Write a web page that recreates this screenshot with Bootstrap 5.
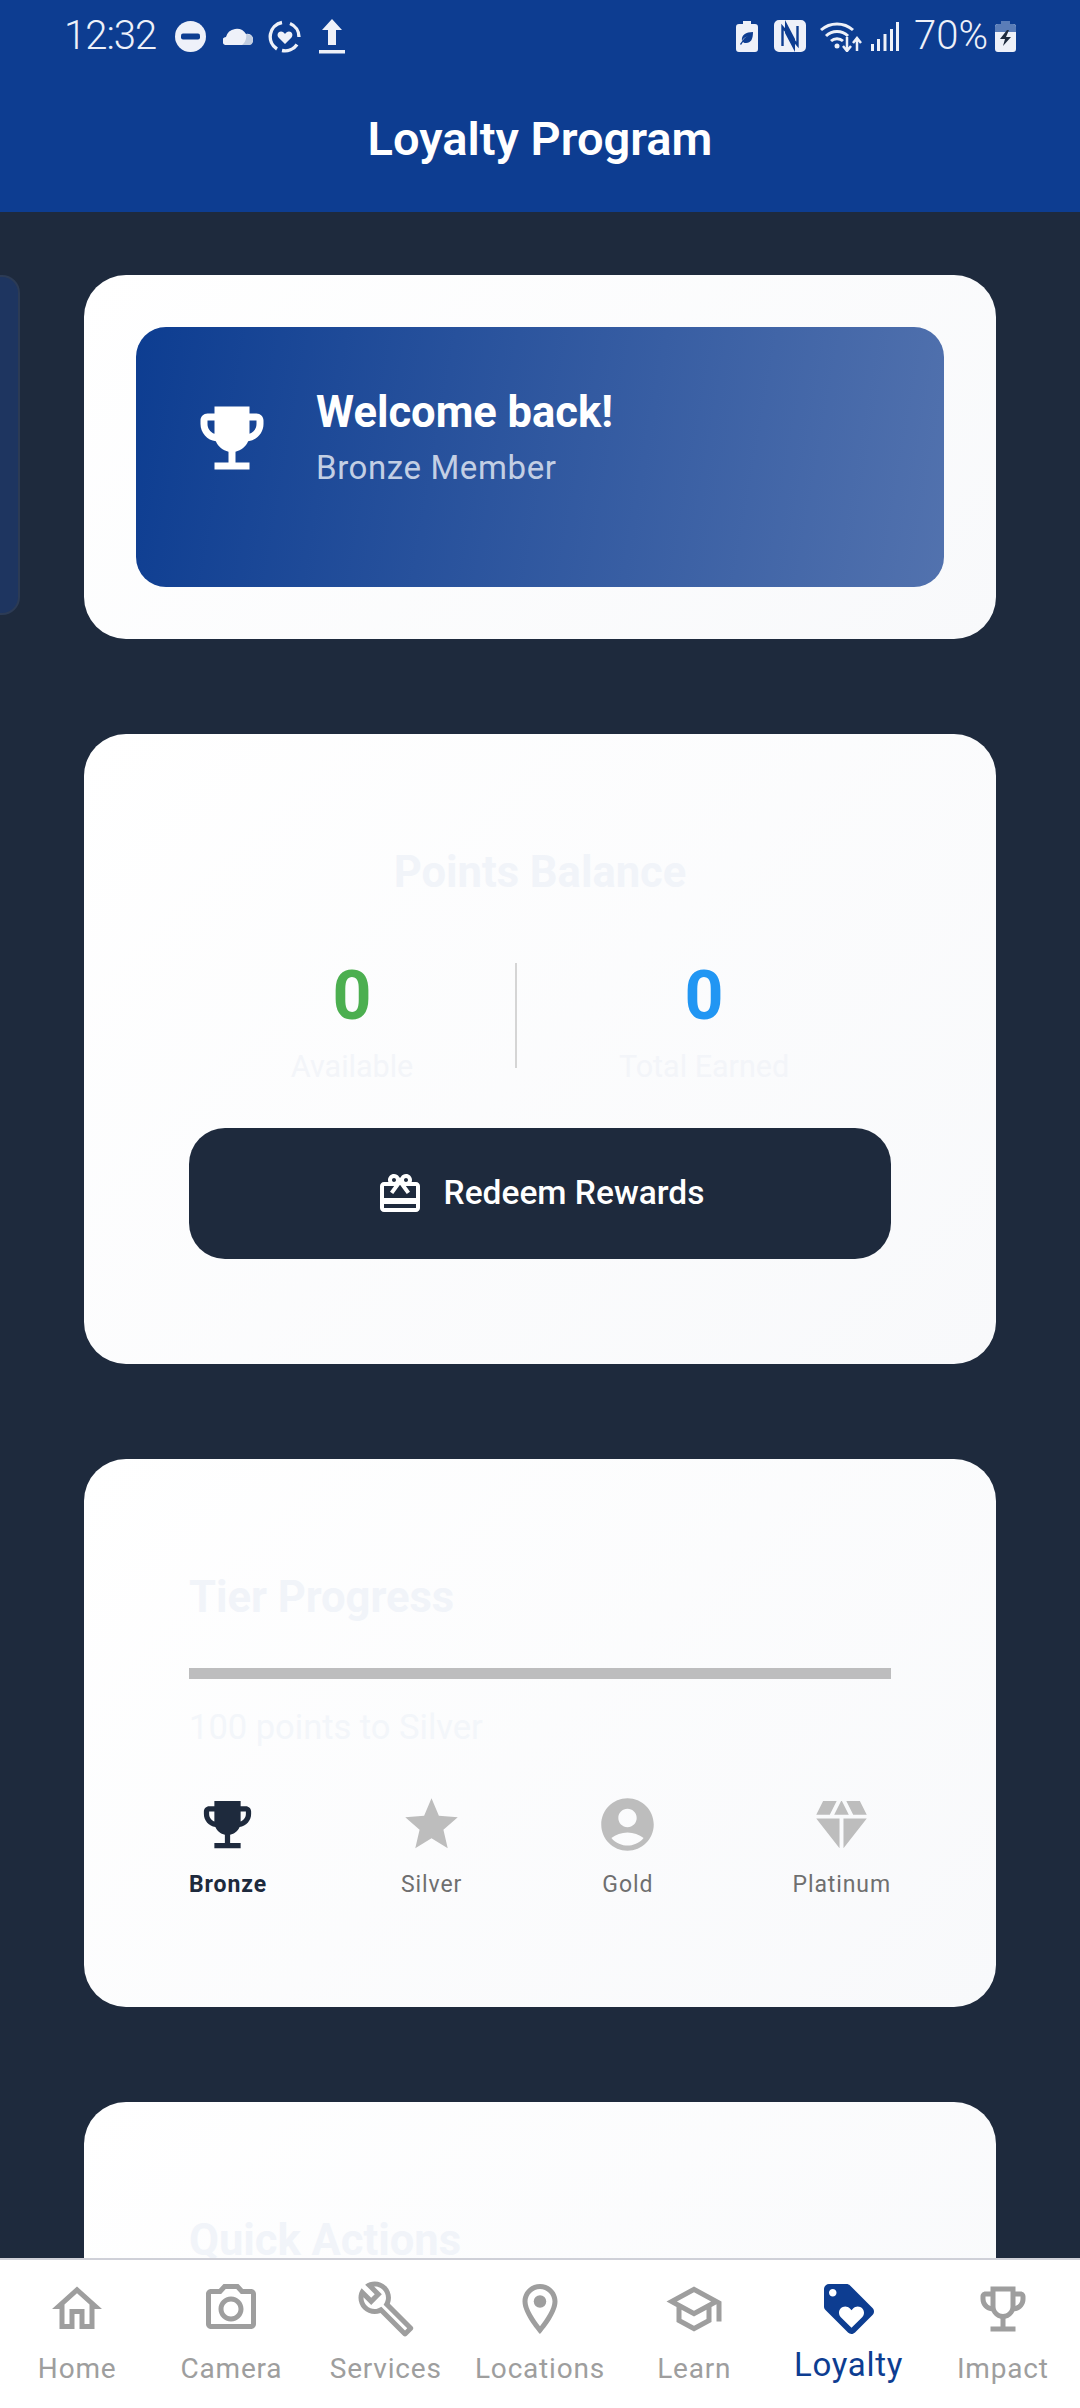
<!DOCTYPE html>
<html lang="en">
<head>
<meta charset="utf-8">
<title>Loyalty Program</title>
<link href="https://cdn.jsdelivr.net/npm/bootstrap@5.3.0/dist/css/bootstrap.min.css" rel="stylesheet">
<style>
html,body{height:100%;margin:0;}
body{font-family:Roboto,"Liberation Sans",sans-serif;background:#1e2a3d;overflow:hidden;}
.app-shell{height:2408px;width:1080px;}
.top-bar{height:212px;background:#0d3d91;color:#fff;flex:none;}
.status-row{height:72px;padding:19px 64px 0 64px;color:#eef1f9;}
.status-time{font-size:40px;font-weight:300;line-height:34px;letter-spacing:-1px;}
.status-pct{font-size:40px;font-weight:300;line-height:34px;margin-left:15px;}
.sti{display:block;flex:none;}
.sti-dnd{margin-left:19px;margin-top:2px;}
.sti-cloud{margin-left:17px;margin-top:7px;}
.sti-ring{margin-left:15px;margin-top:1px;}
.sti-up{margin-left:17px;}
.sti-eco{margin-top:2px;}
.sti-nfc{margin-left:16px;margin-top:1px;}
.sti-wifi{margin-left:14px;margin-top:2px;}
.sti-sig{margin-left:9px;margin-top:3px;}
.sti-bat{margin-left:7px;margin-top:2px;}
.page-title{font-size:47px;font-weight:600;line-height:54px;margin:0;padding-top:40px;color:#fff;}
.scroller{flex:1 1 auto;min-height:0;overflow:hidden;padding:63px 84px 0 84px;}
.side-peek{position:absolute;left:-40px;top:275px;width:60px;height:340px;background:#1e3560;border:2px solid #2c3b55;border-radius:18px;}
.panel{background:linear-gradient(135deg,#fff 0%,#f8f9fb 100%);border-radius:42px;margin-bottom:95px;flex:none;}
.panel-a{height:364px;padding:52px;}
.panel-b{height:630px;padding:114px 105px 0;}
.panel-c{height:548px;padding:114px 105px 0;}
.panel-d{height:400px;padding:114px 105px 0;}
.hero{height:260px;border-radius:30px;background:linear-gradient(100deg,#0d3d91 0%,#5272ae 100%);padding:0 54px 39px;color:#fff;gap:42px;}
.hero-title{font-size:43.5px;font-weight:700;line-height:50px;margin:0;}
.hero-sub{font-size:33px;line-height:38px;color:#c3cfe4;letter-spacing:.6px;margin-top:11px;}
.ghost-title{font-size:43.5px;font-weight:700;line-height:50px;color:#f1f4f9;margin:0;}
.stat-num{font-size:68px;font-weight:700;line-height:80px;}
.stat-label{font-size:30.5px;line-height:34px;color:#f3f5f9;margin-top:14px;}
.tone-green{color:#4caf50;}
.tone-blue{color:#2196f3;}
.stat-rule{width:2px;height:105px;background:#d5d5d5;flex:none;margin-top:7px;}
.stat-row{margin-top:58px;}
.redeem-btn{height:131px;width:702px;border-radius:36px;background:#1e2a3d;color:#fff;font-size:33.5px;font-weight:500;margin-top:44px;gap:20px;border:0;}
.redeem-btn:hover{background:#1e2a3d;color:#fff;}
.tier-track{height:11px;background:#bdbdbe;margin-top:45px;}
.tier-note{font-size:34.5px;line-height:38px;color:#f3f6fa;margin-top:29px;}
.tier-row{margin-top:47px;}
.tier-item{color:#6f6f6f;font-size:23px;line-height:26px;letter-spacing:.9px;}
.tier-item svg{fill:#bdbdbd;}
.tier-on{color:#1e2a3d;font-weight:700;}
.tier-on svg{fill:#1e2a3d;}
.tier-gap{height:16px;}
.tab-bar{height:150px;flex:none;background:#fff;border-top:2px solid #cfd0d8;}
.tab-item{width:calc(100% / 7);color:#9e9e9e;font-size:28px;line-height:34px;letter-spacing:.8px;padding-top:19px;}
.tab-item svg{fill:#9e9e9e;display:block;}
.tab-text{margin-top:13px;}
.tab-on{color:#0d3d91;font-size:33px;letter-spacing:.7px;}
.tab-on svg{fill:#0d3d91;}
.tab-on .tab-text{margin-top:9px;}
</style>
</head>
<body>
<div class="app-shell d-flex flex-column position-relative overflow-hidden">
  <header class="top-bar">
    <div class="status-row d-flex align-items-start justify-content-between">
      <div class="d-flex align-items-start">
        <span class="status-time">12:32</span>
        <svg class="sti sti-dnd" width="31" height="31" viewBox="0 0 31 31"><circle cx="15.5" cy="15.5" r="15.5" fill="#eef1f9"/><rect x="6" y="12.5" width="19" height="6" rx="2" fill="#0d3d91"/></svg>
        <svg class="sti sti-cloud" width="30" height="19" viewBox="0 0 30 19"><path d="M4 19a4 4 0 0 1-1-8 11 11 0 0 1 20-3 5 5 0 0 1 3 11z" fill="#eef1f9"/><path d="M23 8c4 0 7 2 7 6s-2 5-4 5h-7c3-2 5-7 4-11z" fill="#c1cde0"/></svg>
        <svg class="sti sti-ring" width="34" height="33" viewBox="0 0 34 33"><path d="M14 2.500A14.500 14.500 0 0 0 9 29M14 30.500a14.500 14.500 0 0 0 15-6M31 17a14.500 14.500 0 0 0-9-13.500" fill="none" stroke="#eef1f9" stroke-width="3.400"/><path d="M17 24l-6.500-6.500c-2-2.500-.5-6 2.500-6 1.800 0 3 1 4 2.500 1-1.500 2.200-2.500 4-2.500 3 0 4.500 3.500 2.500 6z" fill="#eef1f9"/></svg>
        <svg class="sti sti-up" width="26" height="35" viewBox="0 0 26 35"><path d="M13 0l10 11h-6v15H9V11H3z" fill="#eef1f9"/><rect y="31" width="26" height="3.500" fill="#eef1f9"/></svg>
      </div>
      <div class="d-flex align-items-start">
        <svg class="sti sti-eco" width="22" height="31" viewBox="0 0 22 31"><path d="M7 0h8v3h4a3 3 0 0 1 3 3v22a3 3 0 0 1-3 3H3a3 3 0 0 1-3-3V6a3 3 0 0 1 3-3h4z" fill="#eef1f9"/><path d="M6 20c-1-6 4-9 11-9 0 7-2 11-7 11-1 0-2 0-3-1l-2 3-1-1 3-4c1-2 3-3 5-4-2 1-5 2-6 5z" fill="#0d3d91"/></svg>
        <svg class="sti sti-nfc" width="32" height="32" viewBox="0 0 32 32"><path d="M5 0h6v32H5a5 5 0 0 1-5-5V5a5 5 0 0 1 5-5zM21 0h6a5 5 0 0 1 5 5v22a5 5 0 0 1-5 5h-6z" fill="#eef1f9"/><path d="M11 0l10 19V0zM21 32L11 13v19z" fill="#eef1f9"/><path d="M8.500 26V7l15 18V6" fill="none" stroke="#0d3d91" stroke-width="2.400"/></svg>
        <svg class="sti sti-wifi" width="42" height="31" viewBox="0 0 42 31"><path d="M1 9a24 24 0 0 1 32 0M6 15a16 16 0 0 1 22 0M11 20a9 9 0 0 1 12 0" fill="none" stroke="#eef1f9" stroke-width="3"/><circle cx="17" cy="25" r="2.500" fill="#eef1f9"/><path d="M27 16v13m-4-4l4 5 4-5M37 30V18m-4 4l4-5 4 5" fill="none" stroke="#eef1f9" stroke-width="2.500"/></svg>
        <svg class="sti sti-sig" width="28" height="29" viewBox="0 0 28 29"><g fill="#eef1f9"><rect y="22" width="3" height="7"/><rect x="6" y="17" width="3" height="12"/><rect x="12.500" y="12" width="3" height="17"/><rect x="19" y="7" width="3" height="22"/><rect x="25" y="0" width="3" height="29"/></g></svg>
        <span class="status-pct">70%</span>
        <svg class="sti sti-bat" width="21" height="31" viewBox="0 0 21 31"><path d="M6 0h9v3h3a3 3 0 0 1 3 3v22a3 3 0 0 1-3 3H3a3 3 0 0 1-3-3V6a3 3 0 0 1 3-3h3z" fill="#eef1f9"/><path d="M6 0h9v3h3a3 3 0 0 1 3 3v5H0V6a3 3 0 0 1 3-3h3z" fill="#5a7db8"/><path d="M12 9l-7 9h5l-2 7 8-9h-5l3-7z" fill="#1e2a3d"/></svg>
      </div>
    </div>
    <h1 class="page-title text-center">Loyalty Program</h1>
  </header>

  <div class="side-peek"></div>

  <main class="scroller d-flex flex-column">
    <section class="panel panel-a">
      <div class="hero d-flex align-items-center">
        <svg width="84" height="84" viewBox="0 0 24 24" fill="#fff"><path d="M19 5h-2V3H7v2H5c-1.100 0-2 .9-2 2v1c0 2.550 1.920 4.630 4.390 4.940.63 1.500 1.980 2.630 3.610 2.960V19H7v2h10v-2h-4v-3.100c1.630-.33 2.980-1.460 3.610-2.960C19.080 12.630 21 10.550 21 8V7c0-1.100-.9-2-2-2zM5 8V7h2v3.820C5.840 10.400 5 9.300 5 8zm14 0c0 1.300-.84 2.400-2 2.820V7h2v1z"/></svg>
        <div>
          <h2 class="hero-title">Welcome back!</h2>
          <div class="hero-sub">Bronze Member</div>
        </div>
      </div>
    </section>

    <section class="panel panel-b">
      <h2 class="ghost-title text-center">Points Balance</h2>
      <div class="stat-row d-flex align-items-start">
        <div class="flex-grow-1 text-center"><div class="stat-num tone-green">0</div><div class="stat-label">Available</div></div>
        <div class="stat-rule"></div>
        <div class="flex-grow-1 text-center"><div class="stat-num tone-blue">0</div><div class="stat-label">Total Earned</div></div>
      </div>
      <button type="button" class="btn redeem-btn d-flex align-items-center justify-content-center">
        <svg width="48" height="48" viewBox="0 0 24 24" fill="#fff"><path d="M20 6h-2.180c.11-.31.18-.65.18-1 0-1.660-1.340-3-3-3-1.050 0-1.960.54-2.500 1.350l-.5.67-.5-.68C10.960 2.540 10.050 2 9 2 7.340 2 6 3.340 6 5c0 .35.07.69.18 1H4c-1.110 0-1.990.89-1.990 2L2 19c0 1.110.89 2 2 2h16c1.110 0 2-.89 2-2V8c0-1.110-.89-2-2-2zm-5-2c.55 0 1 .45 1 1s-.45 1-1 1-1-.45-1-1 .45-1 1-1zM9 4c.55 0 1 .45 1 1s-.45 1-1 1-1-.45-1-1 .45-1 1-1zm11 15H4v-2h16v2zm0-5H4V8h5.080L7 10.830 8.620 12 12 7.400l3.380 4.600L17 10.830 14.920 8H20v6z"/></svg>
        <span>Redeem Rewards</span>
      </button>
    </section>

    <section class="panel panel-c">
      <h2 class="ghost-title">Tier Progress</h2>
      <div class="tier-track"></div>
      <div class="tier-note">100 points to Silver</div>
      <div class="tier-row d-flex justify-content-between">
        <div class="tier-item tier-on d-flex flex-column align-items-center">
          <svg width="63" height="63" viewBox="0 0 24 24"><path d="M19 5h-2V3H7v2H5c-1.100 0-2 .9-2 2v1c0 2.550 1.920 4.630 4.390 4.940.63 1.500 1.980 2.630 3.610 2.960V19H7v2h10v-2h-4v-3.100c1.630-.33 2.980-1.460 3.610-2.960C19.080 12.630 21 10.550 21 8V7c0-1.100-.9-2-2-2zM5 8V7h2v3.820C5.840 10.400 5 9.300 5 8zm14 0c0 1.300-.84 2.400-2 2.820V7h2v1z"/></svg>
          <div class="tier-gap"></div><span>Bronze</span>
        </div>
        <div class="tier-item d-flex flex-column align-items-center">
          <svg width="63" height="63" viewBox="0 0 24 24"><path d="M12 17.270L18.180 21l-1.640-7.030L22 9.240l-7.190-.61L12 2 9.190 8.630 2 9.240l5.460 4.730L5.820 21z"/></svg>
          <div class="tier-gap"></div><span>Silver</span>
        </div>
        <div class="tier-item d-flex flex-column align-items-center">
          <svg width="63" height="63" viewBox="0 0 24 24"><path d="M12 2C6.480 2 2 6.480 2 12s4.480 10 10 10 10-4.480 10-10S17.520 2 12 2zm0 4c1.930 0 3.500 1.570 3.500 3.500S13.930 13 12 13s-3.500-1.570-3.500-3.500S10.070 6 12 6zm0 14c-2.030 0-4.430-.82-6.140-2.880C7.550 15.800 9.680 15 12 15s4.450.8 6.140 2.120C16.430 19.180 14.030 20 12 20z"/></svg>
          <div class="tier-gap"></div><span>Gold</span>
        </div>
        <div class="tier-item d-flex flex-column align-items-center">
          <svg width="63" height="63" viewBox="0 0 24 24"><path d="M12.160 3h-.32L9.210 8.250h5.580zm4.300 5.250h5.160L19 3h-5.160zm5.160 1.500h-8.870V21zM2.380 8.250h5.160L10.160 3H5zm0 1.500L11.250 21V9.750z"/></svg>
          <div class="tier-gap"></div><span>Platinum</span>
        </div>
      </div>
    </section>

    <section class="panel panel-d">
      <h2 class="ghost-title">Quick Actions</h2>
    </section>
  </main>

  <nav class="tab-bar d-flex">
    <div class="tab-item d-flex flex-column align-items-center"><svg width="60" height="60" viewBox="0 0 24 24"><path d="M12 5.690l5 4.500V18h-2v-6H9v6H7v-7.810l5-4.500M12 3L2 12h3v8h6v-6h2v6h6v-8h3L12 3z"/></svg><span class="tab-text">Home</span></div>
    <div class="tab-item d-flex flex-column align-items-center"><svg width="60" height="60" viewBox="0 0 24 24"><path d="M14.120 4l1.830 2H20v12H4V6h4.050l1.830-2h4.240M15 2H9L7.170 4H4c-1.100 0-2 .9-2 2v12c0 1.100.9 2 2 2h16c1.100 0 2-.9 2-2V6c0-1.100-.9-2-2-2h-3.170L15 2zm-3 7c1.650 0 3 1.350 3 3s-1.350 3-3 3-3-1.350-3-3 1.350-3 3-3m0-2c-2.760 0-5 2.240-5 5s2.240 5 5 5 5-2.240 5-5-2.240-5-5-5z"/></svg><span class="tab-text">Camera</span></div>
    <div class="tab-item d-flex flex-column align-items-center"><svg width="60" height="60" viewBox="0 0 24 24"><path d="M22.610 18.990l-9.080-9.080c.93-2.340.45-5.100-1.440-7C9.790.61 6.210.4 3.660 2.260L7.500 6.110 6.080 7.520 2.250 3.690C.39 6.230.6 9.820 2.900 12.110c1.860 1.860 4.570 2.350 6.890 1.480l9.110 9.110c.39.39 1.020.39 1.410 0l2.300-2.300c.4-.38.4-1.010 0-1.410zm-3 1.600l-9.460-9.460c-.61.45-1.290.72-2 .82-1.360.2-2.790-.21-3.830-1.250C3.370 9.760 2.930 8.500 3 7.260l3.090 3.090 4.240-4.240-3.090-3.090c1.240-.07 2.490.37 3.440 1.310 1.080 1.080 1.490 2.570 1.240 3.960-.12.71-.42 1.370-.88 1.960l9.450 9.450-.88.88z"/></svg><span class="tab-text">Services</span></div>
    <div class="tab-item d-flex flex-column align-items-center"><svg width="60" height="60" viewBox="0 0 24 24"><path d="M12 2C8.130 2 5 5.130 5 9c0 5.250 7 13 7 13s7-7.750 7-13c0-3.870-3.130-7-7-7zM7 9c0-2.760 2.240-5 5-5s5 2.240 5 5c0 2.880-2.880 7.190-5 9.880C9.920 16.210 7 11.850 7 9z"/><circle cx="12" cy="9" r="2.500"/></svg><span class="tab-text">Locations</span></div>
    <div class="tab-item d-flex flex-column align-items-center"><svg width="60" height="60" viewBox="0 0 24 24"><path d="M12 3L1 9l4 2.180v6L12 21l7-3.820v-6l2-1.090V17h2V9L12 3zm6.820 6L12 12.720 5.180 9 12 5.280 18.820 9zM17 15.990l-5 2.730-5-2.730v-3.720L12 15l5-2.730v3.720z"/></svg><span class="tab-text">Learn</span></div>
    <div class="tab-item tab-on d-flex flex-column align-items-center"><svg width="60" height="60" viewBox="0 0 24 24"><path d="M21.410 11.580l-9-9C12.050 2.220 11.550 2 11 2H4c-1.100 0-2 .9-2 2v7c0 .55.22 1.050.59 1.420l9 9c.36.36.86.58 1.410.58s1.050-.22 1.410-.59l7-7c.37-.36.59-.86.59-1.410s-.23-1.060-.59-1.420zM5.500 7C4.670 7 4 6.330 4 5.500S4.670 4 5.500 4 7 4.670 7 5.500 6.330 7 5.500 7zm11.770 8.270L13 19.540l-4.270-4.270C8.280 14.810 8 14.190 8 13.500c0-1.380 1.120-2.500 2.500-2.500.69 0 1.320.28 1.770.74l.73.72.73-.73c.45-.45 1.080-.73 1.770-.73 1.380 0 2.500 1.120 2.500 2.500 0 .69-.28 1.320-.73 1.770z"/></svg><span class="tab-text">Loyalty</span></div>
    <div class="tab-item d-flex flex-column align-items-center"><svg width="60" height="60" viewBox="0 0 24 24"><path d="M19 5h-2V3H7v2H5c-1.100 0-2 .9-2 2v1c0 2.550 1.920 4.630 4.390 4.940.63 1.500 1.980 2.630 3.610 2.960V19H7v2h10v-2h-4v-3.100c1.630-.33 2.980-1.460 3.610-2.960C19.080 12.630 21 10.550 21 8V7c0-1.100-.9-2-2-2zM5 8V7h2v3.820C5.840 10.400 5 9.300 5 8zm7 6c-1.650 0-3-1.350-3-3V5h6v6c0 1.650-1.350 3-3 3zm7-6c0 1.300-.84 2.400-2 2.820V7h2v1z"/></svg><span class="tab-text">Impact</span></div>
  </nav>
</div>
<script src="https://cdn.jsdelivr.net/npm/bootstrap@5.3.0/dist/js/bootstrap.bundle.min.js"></script>
</body>
</html>
